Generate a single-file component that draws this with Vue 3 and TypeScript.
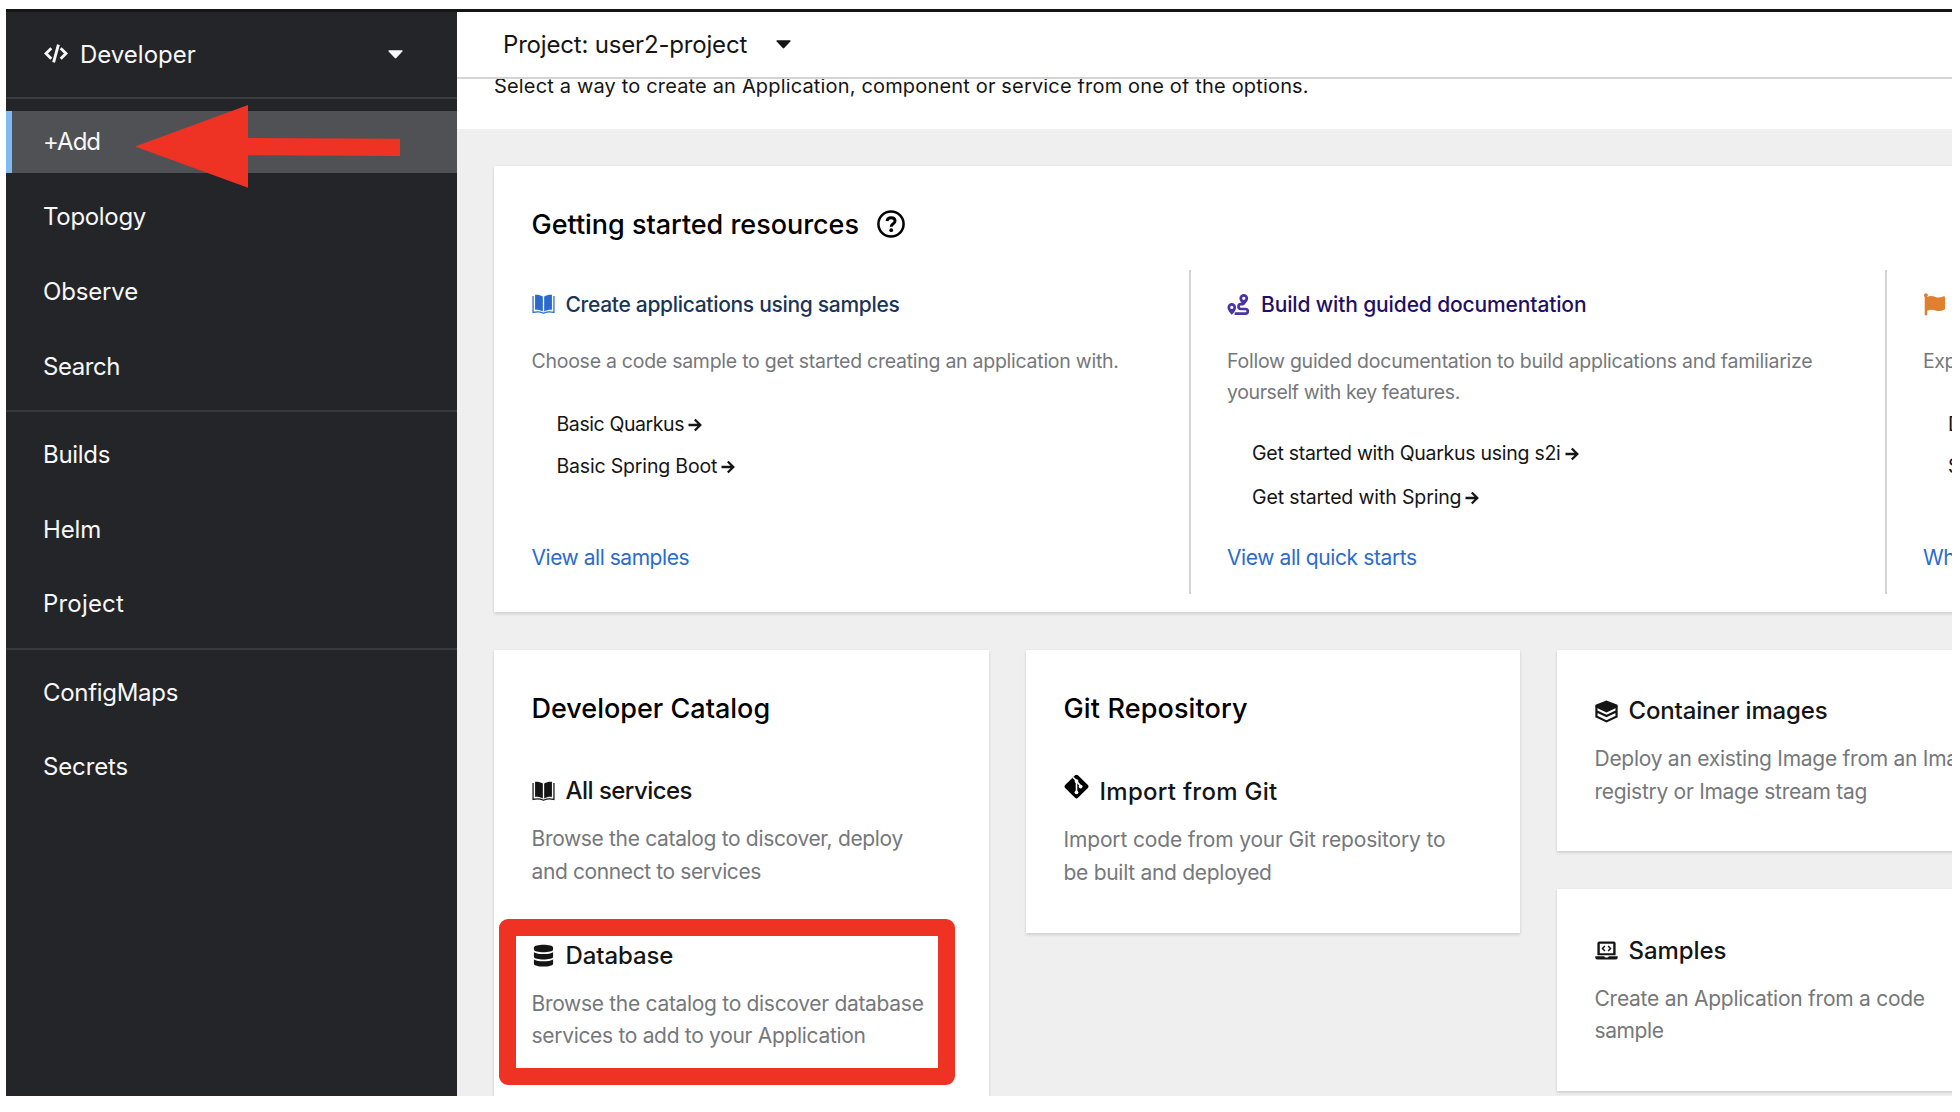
<script setup lang="ts">
interface Label { text: string; ls: number }
interface Tile { icon: string; title: Label; lines: Label[] }
interface Card { title?: Label; kind: string; tiles: Tile[] }
interface Resource {
  icon: string; tone: string; title: Label; lines: Label[]; links: Label[]; more: Label; arrows: boolean
}

const l = (text: string, ls = 0): Label => ({ text, ls })
const track = (x: Label) => ({ letterSpacing: (x.ls - 1 / x.text.length).toFixed(3) + 'px' })

const navGroups: Label[][] = [
  [l('+Add', -0.75), l('Topology', -0.19), l('Observe', -0.02), l('Search', -0.27)],
  [l('Builds', -0.15), l('Helm', 0.08), l('Project', 0.33)],
  [l('ConfigMaps', -0.2), l('Secrets', 0)],
]

const resources: Resource[] = [
  {
    icon: 'book', tone: 'blue', title: l('Create applications using samples', -0.28),
    lines: [l('Choose a code sample to get started creating an application with.', -0.25)],
    links: [l('Basic Quarkus', -0.33), l('Basic Spring Boot', -0.12)],
    more: l('View all samples', -0.4), arrows: true,
  },
  {
    icon: 'route', tone: 'purple', title: l('Build with guided documentation', -0.1),
    lines: [l('Follow guided documentation to build applications and familiarize', -0.235), l('yourself with key features.', -0.35)],
    links: [l('Get started with Quarkus using s2i', -0.24), l('Get started with Spring', -0.09)],
    more: l('View all quick starts', -0.35), arrows: true,
  },
  {
    icon: 'flag', tone: 'orange', title: l('Explore new developer features'),
    lines: [l('Explore new features', -0.4)],
    links: [l('Discover certified Helm Charts'), l('Start building')],
    more: l("What's new", -0.3), arrows: false,
  },
]

const columns: Card[][] = [
  [{
    kind: 'catalog', title: l('Developer Catalog', 0.06),
    tiles: [
      { icon: 'book', title: l('All services', -0.45), lines: [l('Browse the catalog to discover, deploy', -0.31), l('and connect to services', -0.34)] },
      { icon: 'database', title: l('Database', 0.02), lines: [l('Browse the catalog to discover database', -0.28), l('services to add to your Application', -0.28)] },
    ],
  }],
  [{
    kind: 'git', title: l('Git Repository', 0.2),
    tiles: [{ icon: 'git', title: l('Import from Git', 0.35), lines: [l('Import code from your Git repository to', -0.13), l('be built and deployed', -0.24)] }],
  }],
  [
    { kind: 'single', tiles: [{ icon: 'layers', title: l('Container images', -0.1), lines: [l('Deploy an existing Image from an Image', -0.24), l('registry or Image stream tag', -0.25)] }] },
    { kind: 'single', tiles: [{ icon: 'laptop', title: l('Samples', 0.09), lines: [l('Create an Application from a code', -0.23), l('sample', -0.25)] }] },
  ],
]

const icons: Record<string, string> = {
  book: '<path d="M3.2 1.8C6.300 1.6 9 2.300 11.300 3.700V19.200C9 17.800 6.300 17.300 3.200 17.500ZM20.800 1.800C17.700 1.600 15 2.300 12.700 3.700V19.200C15 17.800 17.700 17.300 20.800 17.500Z"/><path d="M1.100 3.200V20.300C5 19.200 8.300 19.300 11.500 20.900H12.500C15.700 19.300 19 19.200 22.900 20.300V3.200" fill="none" stroke="currentColor" stroke-width="1.300"/>',
  route: '<path fill-rule="evenodd" d="M17.500 1A4.600 4.600 0 0 1 22.100 5.600C22.100 8.200 19.400 11 17.500 13C15.600 11 12.900 8.200 12.900 5.600A4.600 4.600 0 0 1 17.500 1ZM17.500 3.900A1.700 1.700 0 1 0 17.500 7.300A1.700 1.700 0 1 0 17.500 3.900ZM5 10.500A4.500 4.500 0 0 1 9.500 15C9.500 17.600 6.900 20.700 5 22.700C3.100 20.700 .5 17.600 .5 15A4.500 4.500 0 0 1 5 10.500ZM5 13.300A1.700 1.700 0 1 0 5 16.700A1.700 1.700 0 1 0 5 13.300Z"/><path d="M17 11.700H14.500A2.500 2.500 0 0 0 14.500 16.700H19.300A2.400 2.400 0 0 1 19.300 21.500H8" fill="none" stroke="currentColor" stroke-width="2.800"/>',
  flag: '<path d="M1.200 3A2 2 0 1 1 4.400 3.700V4.200C7.500 2.700 10.200 3.200 13 4.200C16 5.200 18.400 4.700 21 3.600Q23 3 23 4.800V16.200Q23 17.100 22.200 17.500C19 19.100 16 19.200 13 18.200C10 17.200 7.500 17 4.400 18.500V22.500Q4.400 23.500 3.400 23.500H2.800Q1.800 23.500 1.800 22.500V4.400Z"/>',
  database: '<path d="M2 3.700C2 -.3 22 -.3 22 3.700V5.800C22 9.600 2 9.600 2 5.800ZM2 8.500C6 11.200 18 11.200 22 8.500V13.400C22 17.200 2 17.200 2 13.400ZM2 16.100C6 18.800 18 18.800 22 16.100V20.500C22 24.400 2 24.400 2 20.500Z"/>',
  git: '<path d="M10.600 1.200Q12 0 13.400 1.200L22.900 10.600Q24.100 12 22.900 13.400L13.400 22.900Q12 24.100 10.600 22.900L1.100 13.400Q-.1 12 1.100 10.600Z"/><path d="M8.700 3.200L12 6.500V17.300M12 7L16 11.400" fill="none" stroke="#fff" stroke-width="1.500"/><circle cx="12" cy="6.800" r="1.800" fill="#fff"/><circle cx="16" cy="12" r="1.800" fill="#fff"/><circle cx="12" cy="17.600" r="1.800" fill="#fff"/>',
  layers: '<path d="M12 .5L23.500 5V7.500L12 13L.5 7.500V5Z"/><path d="M1.500 6V17.300L12 22.300L22.500 17.300V6M1.500 11.700L12 16.800L22.500 11.700" fill="none" stroke="currentColor" stroke-width="2.300"/>',
  laptop: '<path fill-rule="evenodd" d="M4.500 2.500H19.500Q21.500 2.500 21.500 4.500V17H2.500V4.500Q2.500 2.500 4.500 2.500ZM5 5V14.800H19V5Z"/><path d="M.3 18H9.500Q10 19.200 11 19.200H13Q14 19.200 14.500 18H23.700V19.500Q23.500 21.500 21 21.500H3Q.5 21.500 .3 19.500Z"/><path d="M10.300 7.300L7.800 9.900L10.300 12.500M13.700 7.300L16.200 9.900L13.700 12.500" fill="none" stroke="currentColor" stroke-width="1.600"/>',
}
</script>

<template>
  <div class="stage">
    <div class="frame">
      <aside class="sidebar">
        <div class="perspective">
          <svg class="code" viewBox="0 0 24 19" fill="none" stroke="currentColor" stroke-width="2.900">
            <path class="stroke" d="M7.300 4.300L2 9.500L7.300 14.700M16.700 4.300L22 9.500L16.700 14.700M14.400 .7L9.600 18.300" />
          </svg>
          <span class="perspective-name">Developer</span>
          <svg class="caret" viewBox="0 0 16 9"><path d="M1 0H15Q16 .3 15.300 1.300L8.800 8.300Q8 9 7.200 8.300L.7 1.300Q0 .3 1 0Z" /></svg>
        </div>
        <nav>
          <ul v-for="(group, g) in navGroups" :key="g" class="group">
            <li v-for="(item, i) in group" :key="item.text" :class="['item', { active: g === 0 && i === 0 }]">
              <span :style="track(item)">{{ item.text }}</span>
            </li>
          </ul>
        </nav>
      </aside>

      <main class="main">
        <div class="project-bar">
          <span>Project: user2-project</span>
          <svg class="caret" viewBox="0 0 16 9"><path d="M1 0H15Q16 .3 15.300 1.300L8.800 8.300Q8 9 7.200 8.300L.7 1.300Q0 .3 1 0Z" /></svg>
        </div>
        <div class="intro"><p>Select a way to create an Application, component or service from one of the options.</p></div>

        <div class="page">
          <section class="card started">
            <h2 class="started-title">
              <span>Getting started resources</span>
              <svg class="help" viewBox="0 0 28 28">
                <circle cx="14" cy="14" r="12.600" fill="none" stroke="currentColor" stroke-width="2.500" />
                <path d="M10 11.200C10.300 8.700 12 7.700 14.100 7.700C16.500 7.700 18.100 9.100 18.100 11C18.100 13.900 14.200 13.700 14.200 16.700" fill="none" stroke="currentColor" stroke-width="2.900" />
                <circle cx="14.200" cy="20.200" r="1.900" />
              </svg>
            </h2>
            <div class="resources">
              <article v-for="r in resources" :key="r.icon" :class="['resource', r.tone]">
                <h3><svg class="icon" viewBox="0 0 24 24" v-html="icons[r.icon]"></svg><span :style="track(r.title)">{{ r.title.text }}</span></h3>
                <div class="about"><p v-for="x in r.lines" :key="x.text" :style="track(x)">{{ x.text }}</p></div>
                <ul class="links">
                  <li v-for="x in r.links" :key="x.text">
                    <span :style="track(x)">{{ x.text }}</span>
                    <svg v-if="r.arrows" class="arrow" viewBox="0 0 14 14"><path d="M.5 7H12M6.800 1.500L12.300 7L6.800 12.500" fill="none" stroke="currentColor" stroke-width="2.300" /></svg>
                  </li>
                </ul>
                <a class="more" :style="track(r.more)">{{ r.more.text }}</a>
              </article>
            </div>
          </section>

          <div class="columns">
            <div v-for="(col, c) in columns" :key="c" class="column">
              <section v-for="(card, k) in col" :key="k" :class="['card', card.kind]">
                <h2 v-if="card.title" class="card-title" :style="track(card.title)">{{ card.title.text }}</h2>
                <div v-for="tile in card.tiles" :key="tile.title.text" class="tile">
                  <h3><svg class="icon" viewBox="0 0 24 24" v-html="icons[tile.icon]"></svg><span :style="track(tile.title)">{{ tile.title.text }}</span></h3>
                  <p v-for="x in tile.lines" :key="x.text" :style="track(x)">{{ x.text }}</p>
                </div>
              </section>
            </div>
          </div>
        </div>
      </main>
    </div>

    <svg class="pointer" viewBox="0 0 266 84"><path d="M0 41.500L113 0V33L265 33.700V51L113 50.200V82.700Z" /></svg>
    <div class="highlight"></div>
  </div>
</template>

<style>
body { background: #fff; overflow: hidden; }
</style>

<style scoped>
* { box-sizing: border-box; }
h2, h3, p, ul { margin: 0; padding: 0; list-style: none; font-weight: 400; }
svg { display: block; flex: none; fill: currentColor; }
p, span, a, h2 { white-space: nowrap; }

.stage { position: relative; width: 1960px; height: 1112px; padding: 9px 8px 16px 6px; overflow: hidden; font-family: Inter, "Liberation Sans", sans-serif; color: #151515; }
.frame { display: grid; grid-template-columns: 451px minmax(0, 1fr); height: 1087px; border-top: 3px solid #151515; overflow: hidden; }

.sidebar { background: #242529; color: #f7f7f7; font-size: 24px; }
.perspective { display: flex; align-items: center; height: 87px; padding: 0 54px 0 38px; border-bottom: 2px solid #3a3b3f; }
.perspective-name { flex: 1; margin-left: 12px; }
.code { width: 24px; height: 19px; margin-bottom: 2px; }
.stroke { fill: none; }
.caret { width: 15px; height: 9px; }
.group { display: flex; flex-direction: column; gap: 12.700px; padding: 11.300px 0 13px; border-bottom: 2px solid #38393d; }
.group:first-child { padding: 12px 0 13px; }
.group:last-child { padding-top: 11.500px; border-bottom: 0; }
.item { display: flex; align-items: center; height: 62px; padding-left: 37px; }
.item.active { background: #505154; border-left: 6px solid #7fbaf5; padding: 0 0 1px 31px; }

.main { display: flex; flex-direction: column; min-width: 0; overflow: hidden; background: #efefef; }
.project-bar { display: flex; flex: none; align-items: center; height: 67px; padding: 0 0 1px 46px; gap: 29px; background: #fff; border-bottom: 2px solid #d4d4d4; font-size: 24px; letter-spacing: -.180px; }
.intro { flex: none; height: 49.500px; padding-left: 37px; overflow: hidden; background: #fff; }
.intro p { margin-top: -8px; font-size: 20px; line-height: 30px; letter-spacing: .165px; }
.page { flex: none; padding: 37.500px 0 0 37px; }

.card { background: #fff; box-shadow: 0 2px 3px rgba(0, 0, 0, .12), 0 0 2px rgba(0, 0, 0, .06); }
.started { width: 1560px; height: 446px; padding: 40px 0 0 37.500px; }
.started-title { display: flex; align-items: center; gap: 18px; height: 36px; font-size: 27px; font-weight: 500; line-height: 36px; letter-spacing: -.03px; color: #000; }
.started-title span { padding-top: 2px; }
.help { width: 28px; height: 28px; }
.resources { display: flex; height: 324px; margin-top: 28px; }
.resource { display: flex; flex: none; flex-direction: column; width: 696px; padding: 18.500px 0 20px 36px; border-right: 2px solid #d5d5d5; }
.resource:first-child { width: 659.500px; padding-left: 0; }
.resource h3 { display: flex; align-items: center; gap: 11px; height: 32px; font-size: 21px; font-weight: 500; line-height: 32px; }
.icon { width: 23px; height: 23px; }
.blue h3 { color: #1b3557; }
.blue .icon { color: #2a6acb; }
.purple h3 { color: #1f0f66; }
.purple .icon { color: #4a35a5; }
.orange .icon { color: #df7f2f; }
.orange h3 { gap: 14px; }
.about { margin-top: 25.500px; font-size: 19.500px; line-height: 31px; color: #75787b; }
.links { display: flex; flex-direction: column; gap: 12px; margin: 31.500px 0 0 25px; font-size: 19.500px; line-height: 30px; }
.purple .links { margin-top: 29.500px; gap: 14px; }
.links li { display: flex; align-items: center; gap: 4px; height: 30px; }
.arrow { width: 14px; height: 14px; margin-top: 2px; }
.more { margin-top: auto; font-size: 21px; line-height: 32px; color: #2b6bcd; }

.columns { display: grid; grid-template-columns: 495px 494px 494px; gap: 37px; margin-top: 37.500px; }
.column { display: flex; flex-direction: column; gap: 38px; }
.column .card { padding: 41.500px 0 0 37.500px; }
.card.catalog { height: 520px; }
.card.git { height: 283px; }
.column .card.single { height: 201.500px; padding-top: 45.500px; }
.card-title { height: 36px; margin-bottom: 48px; font-size: 27px; font-weight: 500; line-height: 36px; color: #000; }
.git .card-title { margin-bottom: 49px; }
.tile + .tile { margin-top: 51.500px; }
.tile h3 { display: flex; align-items: center; gap: 11px; height: 32px; margin-bottom: 16px; font-size: 24px; font-weight: 500; line-height: 32px; }
.tile p { font-size: 21px; line-height: 32.500px; color: #75787b; }
.git .icon { width: 25px; height: 25px; margin-bottom: 12px; color: #000; }

.pointer { position: absolute; left: 135px; top: 105px; width: 266px; height: 84px; fill: #ee3224; }
.highlight { position: absolute; left: 499px; top: 919px; width: 456px; height: 166px; border: 17.500px solid #ee3224; border-radius: 9px; }
</style>
